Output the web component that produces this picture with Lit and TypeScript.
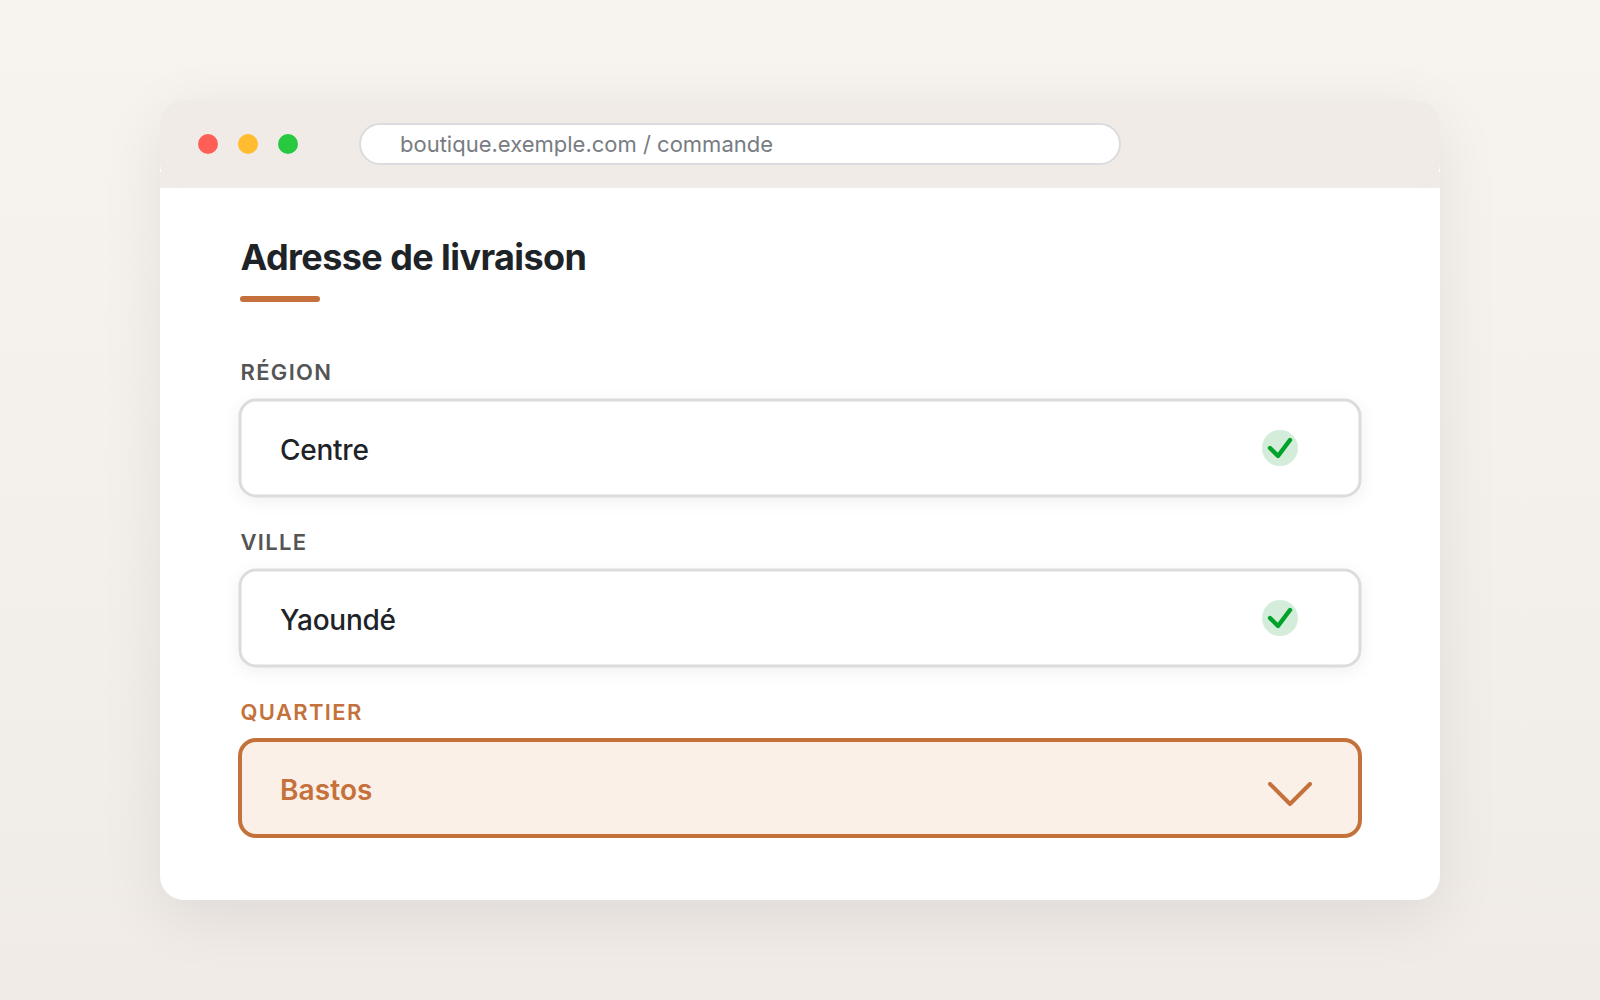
import { LitElement, html, css, svg } from "lit";
import { customElement, property } from "lit/decorators.js";
import { classMap } from "lit/directives/class-map.js";

@customElement("select-field")
class SelectField extends LitElement {
  @property() label = "";
  @property() value = "";
  @property({ type: Boolean }) active = false;

  static styles = css`
    :host {
      display: block;
    }
    .label {
      height: 26px;
      margin-bottom: 15px;
      padding-left: 0.5px;
      font-size: 22px;
      line-height: 26px;
      font-weight: 555;
      letter-spacing: 1.34px;
      color: #555;
    }
    .box {
      display: grid;
      height: 96px;
    }
    .frame,
    .content {
      grid-area: 1 / 1;
    }
    .frame {
      width: 100%;
      height: 96px;
      overflow: visible;
      filter: drop-shadow(0 4px 8px rgba(0, 0, 0, 0.06));
    }
    .frame rect {
      width: 100%;
      height: 96px;
      fill: #fff;
      stroke: #dcdcdc;
      stroke-width: 3px;
    }
    .content {
      display: flex;
      justify-content: space-between;
      align-items: flex-start;
      box-sizing: border-box;
      padding: 4px 40px 0;
      z-index: 1;
    }
    .value {
      font-size: 28px;
      line-height: 92px;
      font-weight: 470;
      letter-spacing: -0.25px;
      color: #1d2327;
    }
    .icon {
      display: block;
      flex: none;
      fill: none;
      stroke-linecap: round;
      stroke-linejoin: round;
      stroke-width: 4px;
    }
    .check {
      width: 36px;
      height: 36px;
      margin: 26px 22px 0 0;
      stroke: #00a32a;
      stroke-width: 4.4px;
    }
    .check circle {
      fill: #d4edda;
      stroke: none;
    }
    .chevron {
      width: 44px;
      height: 24px;
      margin: 38px 8px 0 0;
      stroke: #c4713b;
    }
    .active .label,
    .active .value {
      color: #c4713b;
    }
    .active .value {
      font-weight: 580;
      letter-spacing: 0.1px;
    }
    .active .frame {
      filter: none;
    }
    .active .frame rect {
      fill: #fbf0e7;
      stroke: #c4713b;
      stroke-width: 4px;
    }
  `;

  render() {
    return html`
      <div class=${classMap({ field: true, active: this.active })}>
        <div class="label">${this.label}</div>
        <div class="box">
          <svg class="frame"><rect rx="16" ry="16"></rect></svg>
          <div class="content">
            <span class="value">${this.value}</span>
            ${this.active
              ? html`<svg class="icon chevron" viewBox="0 0 44 24">
                  ${svg`<path d="M2 2 L22 22 L42 2"></path>`}
                </svg>`
              : html`<svg class="icon check" viewBox="0 0 36 36">
                  ${svg`<circle cx="18" cy="18" r="18"></circle><path d="M8 18 L16 26 L28 10"></path>`}
                </svg>`}
          </div>
        </div>
      </div>
    `;
  }
}

@customElement("app-root")
class AppRoot extends LitElement {
  static styles = css`
    :host {
      display: block;
      font-family: Inter, "Liberation Sans", sans-serif;
    }
    .page {
      display: flex;
      justify-content: center;
      align-items: center;
      width: 1600px;
      height: 1000px;
      background: linear-gradient(180deg, #f7f4ef 0%, #f0ebe7 100%);
    }
    .window {
      width: 1280px;
      height: 800px;
      border-radius: 24px;
      background: linear-gradient(#f0ebe7, #f0ebe7) 0 72px / 100% 16px no-repeat #fff;
      box-shadow: 0 16px 64px rgba(0, 0, 0, 0.08);
    }
    .bar {
      display: flex;
      align-items: center;
      box-sizing: border-box;
      height: 88px;
      padding-left: 38px;
      border-radius: 24px;
      background: #f0ebe7;
    }
    .dots {
      display: flex;
      gap: 20px;
    }
    .dot {
      width: 20px;
      height: 20px;
      border-radius: 50%;
    }
    .red {
      background: #ff5f57;
    }
    .yellow {
      background: #febc2e;
    }
    .green {
      background: #28c840;
    }
    .url {
      box-sizing: border-box;
      width: 762px;
      height: 42px;
      margin-left: 61px;
      padding-left: 39px;
      border: 2px solid #dcdcde;
      border-radius: 21px;
      background: #fff;
      font-size: 22px;
      line-height: 38px;
      color: #787c82;
    }
    .body {
      padding: 47px 80px 0;
    }
    .title {
      margin: 0;
      padding-left: 0.5px;
      font-size: 36px;
      line-height: 44px;
      font-weight: 690;
      letter-spacing: -0.58px;
      color: #1d2327;
    }
    .rule {
      width: 80px;
      height: 6px;
      margin: 17px 0 57px;
      border-radius: 3px;
      background: #c4713b;
    }
    .fields {
      display: grid;
      gap: 33px;
    }
  `;

  render() {
    return html`
      <div class="page">
        <div class="window">
          <div class="bar">
            <div class="dots">
              <div class="dot red"></div>
              <div class="dot yellow"></div>
              <div class="dot green"></div>
            </div>
            <div class="url">boutique.exemple.com / commande</div>
          </div>
          <div class="body">
            <h1 class="title">Adresse de livraison</h1>
            <div class="rule"></div>
            <div class="fields">
              <select-field label="RÉGION" value="Centre"></select-field>
              <select-field label="VILLE" value="Yaoundé"></select-field>
              <select-field label="QUARTIER" value="Bastos" active></select-field>
            </div>
          </div>
        </div>
      </div>
    `;
  }
}
